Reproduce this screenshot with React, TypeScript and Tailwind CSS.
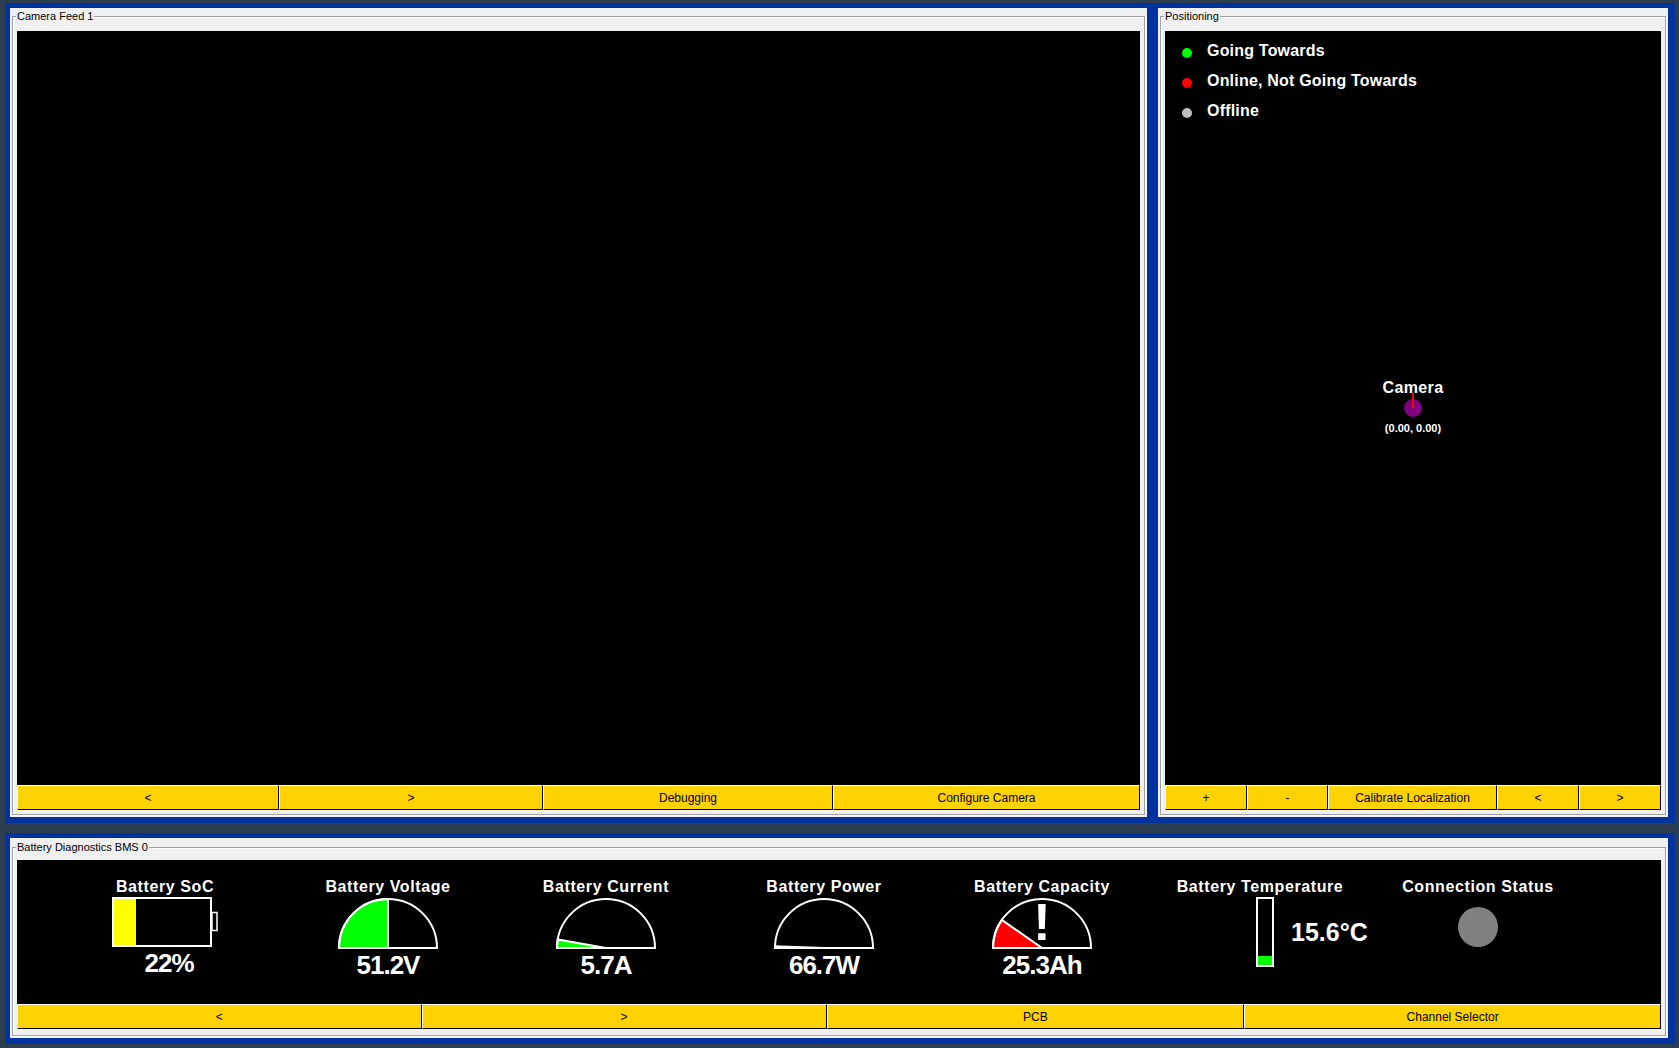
import React from 'react';

const btn =
  'flex items-center justify-center bg-[#ffd200] border border-t-white border-l-white border-b-black border-r-black text-[12px] leading-none text-black';

function ButtonBar({ labels, cols }: { labels: string[]; cols: string }) {
  return (
    <div className={`grid h-[25px] shrink-0 ${cols}`}>
      {labels.map((l, i) => (
        <div key={i} className={btn}>
          {l}
        </div>
      ))}
    </div>
  );
}

function GroupBox({
  title,
  className,
  boxClass,
  children,
}: {
  title: string;
  className?: string;
  boxClass: string;
  children: React.ReactNode;
}) {
  return (
    <div className={`flex flex-col bg-[#f0f0f0] p-[2px] ${className ?? ''}`}>
      <div
        className={`relative flex flex-1 flex-col border border-[#a0a0a0] px-[4px] shadow-[inset_1px_1px_0_#fff,1px_1px_0_#fff] ${boxClass}`}
      >
        <span className="absolute -top-[8px] left-[3px] bg-[#f0f0f0] px-[1px] text-[11px] leading-[14px] text-black">
          {title}
        </span>
        {children}
      </div>
    </div>
  );
}

// semicircle gauge, value drawn as a wedge from the left end
function Gauge({ angle, color, alert }: { angle: number; color: string; alert?: boolean }) {
  const cx = 52;
  const cy = 51;
  const r = 49;
  const a = ((180 - angle) * Math.PI) / 180;
  const ex = cx + r * Math.cos(a);
  const ey = cy - r * Math.sin(a);
  return (
    <div className="relative mt-[2px] h-[52px] w-[104px]">
      <svg width="104" height="52" viewBox="0 0 104 52">
        <path d={`M${cx} ${cy} L${cx - r} ${cy} A${r} ${r} 0 0 1 ${ex} ${ey} Z`} fill={color} stroke="white" strokeWidth="2" />
        <path d={`M${cx - r} ${cy} A${r} ${r} 0 0 1 ${cx + r} ${cy} Z`} fill="none" stroke="white" strokeWidth="2" />
      </svg>
      {alert && (
        <span className="absolute left-1/2 top-[-3px] -translate-x-1/2 text-[52px] font-bold leading-[56px] text-white">
          !
        </span>
      )}
    </div>
  );
}

const title = 'text-[16px] font-bold leading-none tracking-[0.6px] text-white whitespace-nowrap';
const value = 'mt-[3px] text-[26px] font-bold leading-none tracking-[-1px] text-white';

export default function App() {
  return (
    <div className="flex h-[1048px] w-[1679px] flex-col overflow-hidden bg-[#2d3e50] pl-[5px] pr-[4px] pt-[3px] font-['Liberation_Sans',Arial,sans-serif]">
      {/* top row */}
      <div className="flex h-[820px] shrink-0 gap-[11px] bg-[#0033a0] pb-[6px] pl-[5px] pr-[7px] pt-[5px]">
        <GroupBox title="Camera Feed 1" className="w-[1137px]" boxClass="mt-[6px] pt-[14px] pb-[4px]">
          <div className="flex-1 bg-black" />
          <ButtonBar labels={['<', '>', 'Debugging', 'Configure Camera']} cols="grid-cols-[262fr_264fr_290fr_307fr]" />
        </GroupBox>

        <GroupBox title="Positioning" className="flex-1" boxClass="mt-[6px] pt-[14px] pb-[4px]">
          <div className="relative flex-1 bg-black pl-[17px] pt-[4.5px]">
            {[
              { c: 'bg-[#00ff00]', t: 'Going Towards' },
              { c: 'bg-[#ff0000]', t: 'Online, Not Going Towards' },
              { c: 'bg-[#c0c0c0]', t: 'Offline' },
            ].map((row) => (
              <div key={row.t} className="flex h-[30px] items-center">
                <span className={`h-[10px] w-[10px] translate-y-[2px] rounded-full ${row.c}`} />
                <span className="ml-[15px] text-[16px] font-bold tracking-[0.2px] text-white">{row.t}</span>
              </div>
            ))}

            {/* camera marker at canvas origin */}
            <span className="absolute left-1/2 top-1/2 -ml-[9px] -mt-[9px] h-[18px] w-[18px] rounded-full bg-[#800080]" />
            <span className="absolute left-1/2 top-1/2 -ml-[1px] -mt-[15px] h-[15px] w-[2px] bg-[#ff0000]" />
            <span className="absolute left-1/2 top-1/2 -mt-[30px] -translate-x-1/2 text-[16px] font-bold leading-[20px] tracking-[0.4px] text-white">
              Camera
            </span>
            <span className="absolute left-1/2 top-1/2 mt-[13px] -translate-x-1/2 whitespace-nowrap text-[11px] font-bold leading-[14px] text-white">
              (0.00, 0.00)
            </span>
          </div>
          <ButtonBar labels={['+', '-', 'Calibrate Localization', '<', '>']} cols="grid-cols-[82fr_81fr_169fr_82fr_82fr]" />
        </GroupBox>
      </div>

      {/* battery row */}
      <div className="mt-[10px] flex h-[211px] shrink-0 bg-[#0033a0] pb-[6px] pl-[5px] pr-[7px] pt-[5px]">
        <GroupBox title="Battery Diagnostics BMS 0" className="flex-1" boxClass="mt-[7px] pt-[12px] pb-[6px]">
          <div className="flex flex-1 bg-black pl-[34px] pt-[19px]">
            <div className="flex w-[228px] flex-col items-center">
              <div className={title}>Battery SoC</div>
              <svg width="106" height="50" viewBox="0 0 106 50" className="mt-[2px]">
                <rect x="2" y="2" width="22" height="46" fill="#ffff00" />
                <rect x="1" y="1" width="98" height="48" fill="none" stroke="white" strokeWidth="2" />
                <rect x="100" y="15.5" width="5" height="18" fill="none" stroke="white" strokeWidth="1.5" />
              </svg>
              <div className={`${value} ml-[8px]`}>22%</div>
            </div>

            <div className="flex w-[218px] flex-col items-center">
              <div className={title}>Battery Voltage</div>
              <Gauge angle={90} color="#00ff00" />
              <div className={value}>51.2V</div>
            </div>

            <div className="flex w-[218px] flex-col items-center">
              <div className={title}>Battery Current</div>
              <Gauge angle={10} color="#00ff00" />
              <div className={value}>5.7A</div>
            </div>

            <div className="flex w-[218px] flex-col items-center">
              <div className={title}>Battery Power</div>
              <Gauge angle={2} color="#00ff00" />
              <div className={value}>66.7W</div>
            </div>

            <div className="flex w-[218px] flex-col items-center">
              <div className={title}>Battery Capacity</div>
              <Gauge angle={35} color="#ff0000" alert />
              <div className={value}>25.3Ah</div>
            </div>

            <div className="flex w-[218px] flex-col items-center">
              <div className={title}>Battery Temperature</div>
              <div className="mt-[2px] flex items-center self-stretch pl-[105px]">
                <div className="flex h-[70px] w-[18px] flex-col justify-end border-2 border-white">
                  <div className="h-[9px] bg-[#00ff00]" />
                </div>
                <div className="ml-[17px] text-[25px] font-bold leading-none text-white">15.6°C</div>
              </div>
            </div>

            <div className="flex w-[218px] flex-col items-center">
              <div className={title}>Connection Status</div>
              <div className="mt-[12px] h-[40px] w-[40px] rounded-full bg-[#808080]" />
            </div>
          </div>
          <ButtonBar labels={['<', '>', 'PCB', 'Channel Selector']} cols="grid-cols-[405fr_405fr_418fr_417fr]" />
        </GroupBox>
      </div>
    </div>
  );
}
